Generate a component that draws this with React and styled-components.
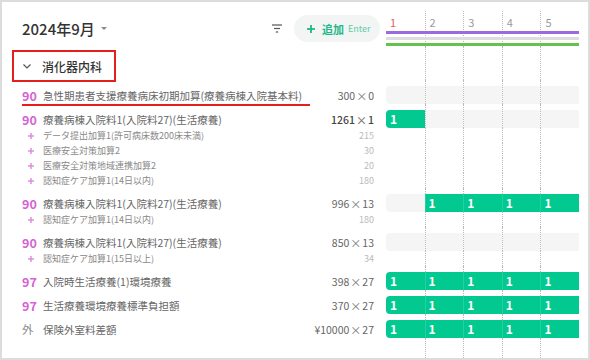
import React from 'react'
import styled, { createGlobalStyle } from 'styled-components'

const GlobalStyle = createGlobalStyle`
  html, body { margin: 0; padding: 0; background: #fff; }
  body { font-family: "Noto Sans CJK JP", "Noto Sans", sans-serif; }
`

const Frame = styled.div`
  box-sizing: border-box;
  width: 590px;
  height: 360px;
  border: 2px solid #dcdcdc;
  padding: 9px 9px 0 12px;
  overflow: hidden;
  background: #fff;
`

const Line = styled.div`
  display: grid;
  grid-template-columns: 360px 193px;
  column-gap: 12px;
  height: ${p => p.$h}px;
`

// toolbar
const Toolbar = styled.div`
  display: flex;
  align-items: center;
`

const Title = styled.div`
  margin-left: 8px;
  font-size: 15px;
  font-weight: 500;
  color: #333;
  display: flex;
  align-items: center;
`

const Caret = styled.span`
  margin-left: 6px;
  width: 0;
  height: 0;
  border-left: 3px solid transparent;
  border-right: 3px solid transparent;
  border-top: 3px solid #888;
`

const FilterBtn = styled.div`
  margin-left: auto;
  width: 12px;
  display: flex;
  justify-content: center;
`

const AddButton = styled.div`
  margin-left: 11px;
  margin-right: -6px;
  width: 86px;
  height: 27px;
  box-sizing: border-box;
  border-radius: 14px;
  background: #f3f4f4;
  display: flex;
  align-items: center;
  padding-left: 13px;
  color: #1db888;
  font-size: 11px;
  font-weight: 700;
  white-space: nowrap;
`

const AddLabel = styled.span`
  margin-left: 7px;
`

const EnterHint = styled.span`
  margin-left: 4px;
  font-size: 9px;
  font-weight: 400;
  color: #5ccfa6;
`

// calendar header
const DayGrid = styled.div`
  display: grid;
  grid-template-columns: repeat(5, 1fr);
  grid-template-rows: 20px 3px 3px 3px 3px 3px;
`

const DayCell = styled.div`
  grid-row: 1 / -1;
  grid-column: ${p => p.$col};
  border-left: ${p => (p.$col === 1 ? 'none' : '1px dotted #b8b8b8')};
  padding: 6px 0 0 4px;
  font-size: 11px;
  line-height: 11px;
  color: ${p => (p.$red ? '#e25b5b' : '#9a9a9a')};
`

const TopBar = styled.div`
  grid-column: 1 / -1;
  grid-row: ${p => p.$row};
  background: ${p => p.$color};
  z-index: 1;
`

// calendar cells
const Cells = styled.div`
  display: grid;
  grid-template-columns: repeat(5, 1fr);
`

const Cell = styled.div`
  border-left: 1px dotted #b8b8b8;
  &:first-child { border-left: none; }
  min-width: 0;
`

const Bar = styled.div`
  margin-top: 6px;
  height: 18px;
  box-sizing: border-box;
  background: ${p => (p.$kind === 'g' ? '#02c990' : '#f5f5f5')};
  border-radius: ${p => (p.$first ? '4px 0 0 4px' : '0')};
  margin-left: ${p => (p.$first || p.$kind !== 'g' ? '0' : '-1px')};
  box-shadow: ${p => (!p.$first && p.$kind === 'g' ? 'inset 1px 0 rgba(255,255,255,0.14)' : 'none')};
  padding-left: 4px;
  color: #fff;
  font-size: 12px;
  font-weight: 700;
  line-height: 18px;
`

// section header
const SectionTitle = styled.div`
  align-self: start;
  margin-top: 6px;
  width: 100px;
  height: 28px;
  box-sizing: border-box;
  outline: 2px solid #e3201b;
  display: flex;
  align-items: center;
  padding-left: 9px;
  gap: 11px;
  font-size: 12px;
  font-weight: 500;
  color: #333;
`

// rows
const MainLeft = styled.div`
  position: relative;
  display: flex;
  align-items: center;
  height: 18px;
  margin-top: 6px;
  padding-left: 8px;
  white-space: nowrap;
  ${p => p.$mark && `
    &::after {
      content: '';
      position: absolute;
      left: 8px;
      width: 288px;
      bottom: -2px;
      height: 2px;
      background: #e3201b;
    }
  `}
`

const Code = styled.span`
  width: 21px;
  flex: none;
  font-size: ${p => (p.$other ? '11.5px' : '12.5px')};
  font-weight: ${p => (p.$other ? 400 : 700)};
  color: ${p => (p.$other ? '#8a8a8a' : '#d563d5')};
`

const Name = styled.span`
  flex: 1;
  overflow: hidden;
  font-size: 10.5px;
  color: #666;
`

const Amount = styled.span`
  font-size: 10.5px;
  color: ${p => (p.$strong ? '#444' : '#666')};
  font-weight: ${p => (p.$strong ? 500 : 400)};
`

const Times = styled.span`
  font-size: 11px;
  color: #777;
  margin: 0 1px;
  position: relative;
  top: 1px;
`

const SubLeft = styled.div`
  display: flex;
  align-items: center;
  padding-left: 14px;
  white-space: nowrap;
`

const Plus = styled.span`
  width: 15px;
  flex: none;
  display: flex;
  align-items: center;
`

const SubName = styled.span`
  flex: 1;
  overflow: hidden;
  font-size: 9px;
  color: #888;
`

const SubValue = styled.span`
  font-size: 9px;
  color: #bbb;
`

const rows = [
  { code: '90', name: '急性期患者支援療養病床初期加算(療養病棟入院基本料)', amount: '300', count: '0', cells: ['x', 'x', 'x', 'x', 'x'], mark: true, subs: [] },
  {
    code: '90', name: '療養病棟入院料1(入院料27)(生活療養)', amount: '1261', count: '1', strong: true, cells: ['g', 'x', 'x', 'x', 'x'],
    subs: [
      ['データ提出加算1(許可病床数200床未満)', '215'],
      ['医療安全対策加算2', '30'],
      ['医療安全対策地域連携加算2', '20'],
      ['認知症ケア加算1(14日以内)', '180'],
    ],
  },
  { code: '90', name: '療養病棟入院料1(入院料27)(生活療養)', amount: '996', count: '13', cells: ['x', 'g', 'g', 'g', 'g'], subs: [['認知症ケア加算1(14日以内)', '180']] },
  { code: '90', name: '療養病棟入院料1(入院料27)(生活療養)', amount: '850', count: '13', cells: ['x', 'x', 'x', 'x', 'x'], subs: [['認知症ケア加算1(15日以上)', '34']] },
  { code: '97', name: '入院時生活療養(1)環境療養', amount: '398', count: '27', cells: ['g', 'g', 'g', 'g', 'g'], subs: [] },
  { code: '97', name: '生活療養環境療養標準負担額', amount: '370', count: '27', cells: ['g', 'g', 'g', 'g', 'g'], subs: [] },
  { code: '外', other: true, name: '保険外室料差額', amount: '¥10000', count: '27', cells: ['g', 'g', 'g', 'g', 'g'], subs: [] },
]

const EmptyCells = () => (
  <Cells>
    {[0, 1, 2, 3, 4].map(i => <Cell key={i} />)}
  </Cells>
)

function FilterIcon() {
  return (
    <svg width="10" height="9" viewBox="0 0 10 9">
      <g stroke="#555" strokeWidth="1.2">
        <line x1="0" y1="1" x2="10" y2="1" />
        <line x1="2" y1="4.5" x2="8" y2="4.5" />
        <line x1="3.8" y1="8" x2="6.2" y2="8" />
      </g>
    </svg>
  )
}

function PlusIcon({ size, color, width }) {
  const h = size / 2
  return (
    <svg width={size} height={size} viewBox={`0 0 ${size} ${size}`}>
      <g stroke={color} strokeWidth={width}>
        <line x1="0" y1={h} x2={size} y2={h} />
        <line x1={h} y1="0" x2={h} y2={size} />
      </g>
    </svg>
  )
}

function Row({ row }) {
  return (
    <>
      <Line $h={24}>
        <MainLeft $mark={row.mark}>
          <Code $other={row.other}>{row.code}</Code>
          <Name>{row.name}</Name>
          <Amount $strong={row.strong}>
            {row.amount}<Times>×</Times>{row.count}
          </Amount>
        </MainLeft>
        <Cells>
          {row.cells.map((k, i) => (
            <Cell key={i}>
              <Bar $kind={k} $first={i === 0}>
                {k === 'g' ? '1' : ''}
              </Bar>
            </Cell>
          ))}
        </Cells>
      </Line>
      {row.subs.map(([n, v], i) => (
        <Line $h={15} key={i}>
          <SubLeft>
            <Plus><PlusIcon size={6} color="#d98ad9" width={1.4} /></Plus>
            <SubName>{n}</SubName>
            <SubValue>{v}</SubValue>
          </SubLeft>
          <EmptyCells />
        </Line>
      ))}
    </>
  )
}

export default function App() {
  return (
    <>
      <GlobalStyle />
      <Frame>
        <Line $h={35}>
          <Toolbar>
            <Title>2024年9月<Caret /></Title>
            <FilterBtn><FilterIcon /></FilterBtn>
            <AddButton>
              <PlusIcon size={8} color="#1db888" width={1.8} />
              <AddLabel>追加</AddLabel>
              <EnterHint>Enter</EnterHint>
            </AddButton>
          </Toolbar>
          <DayGrid>
            {[1, 2, 3, 4, 5].map(d => (
              <DayCell key={d} $col={d} $red={d === 1}>{d}</DayCell>
            ))}
            <TopBar $row={2} $color="#9b6ae0" />
            <TopBar $row={4} $color="#dddddd" />
            <TopBar $row={6} $color="#63c34c" />
          </DayGrid>
        </Line>
        <Line $h={34}>
          <div>
            <SectionTitle>
              <svg width="8" height="5" viewBox="0 0 8 5">
                <polyline points="0.5,0.5 4,4 7.5,0.5" fill="none" stroke="#555" strokeWidth="1.2" />
              </svg>
              消化器内科
            </SectionTitle>
          </div>
          <EmptyCells />
        </Line>
        {rows.map((r, i) => <Row row={r} key={i} />)}
        <Line $h={22}>
          <div />
          <EmptyCells />
        </Line>
      </Frame>
    </>
  )
}
